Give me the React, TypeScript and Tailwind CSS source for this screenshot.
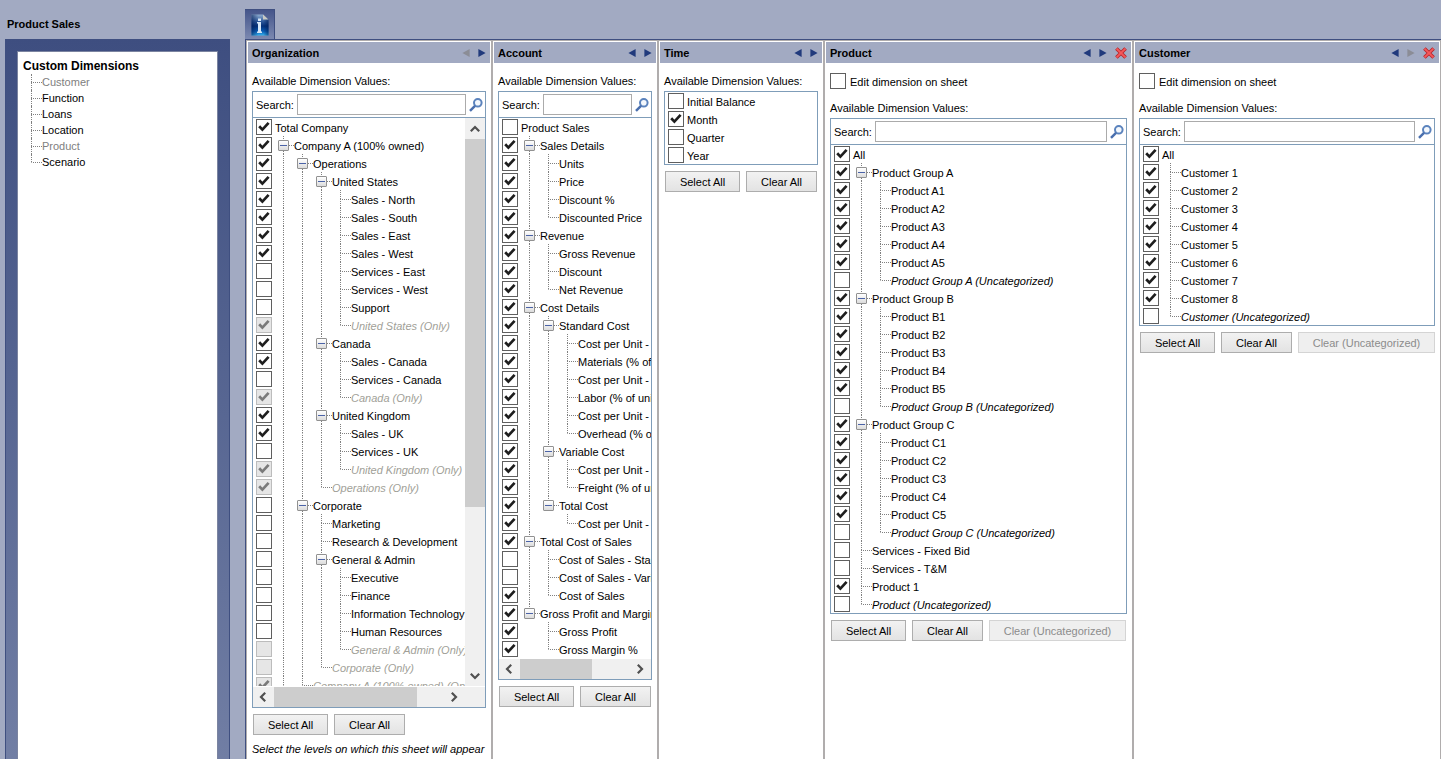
import React, { useId, useState } from 'react';

type Item = {
  label: string;
  level: number;
  on?: boolean;
  group?: boolean;
  italic?: boolean;
  disabled?: boolean;
};

// "+" = checked, "-" = unchecked, ">" = has children, "/" = italic, "!" = disabled
const parse = (text: string): Item[] =>
  text
    .trim()
    .split('\n')
    .map((line) => {
      const [level, flags, label] = line.trim().split('|');
      return {
        label,
        level: Number(level),
        on: flags.includes('+'),
        group: flags.includes('>'),
        italic: flags.includes('/'),
        disabled: flags.includes('!'),
      };
    });

const ORGANIZATION = parse(`
0|+|Total Company
1|+>|Company A (100% owned)
2|+>|Operations
3|+>|United States
4|+|Sales - North
4|+|Sales - South
4|+|Sales - East
4|+|Sales - West
4|-|Services - East
4|-|Services - West
4|-|Support
4|+/!|United States (Only)
3|+>|Canada
4|+|Sales - Canada
4|-|Services - Canada
4|+/!|Canada (Only)
3|+>|United Kingdom
4|+|Sales - UK
4|-|Services - UK
4|+/!|United Kingdom (Only)
3|+/!|Operations (Only)
2|->|Corporate
3|-|Marketing
3|-|Research & Development
3|->|General & Admin
4|-|Executive
4|-|Finance
4|-|Information Technology
4|-|Human Resources
4|-/!|General & Admin (Only)
3|-/!|Corporate (Only)
2|+/!|Company A (100% owned) (Only)
`);

const ACCOUNT = parse(`
0|-|Product Sales
1|+>|Sales Details
2|+|Units
2|+|Price
2|+|Discount %
2|+|Discounted Price
1|+>|Revenue
2|+|Gross Revenue
2|+|Discount
2|+|Net Revenue
1|+>|Cost Details
2|+>|Standard Cost
3|+|Cost per Unit - Materials
3|+|Materials (% of unit cost)
3|+|Cost per Unit - Labor
3|+|Labor (% of unit cost)
3|+|Cost per Unit - Overhead
3|+|Overhead (% of unit cost)
2|+>|Variable Cost
3|+|Cost per Unit - Freight
3|+|Freight (% of unit cost)
2|+>|Total Cost
3|+|Cost per Unit - Total
1|+>|Total Cost of Sales
2|-|Cost of Sales - Standard
2|-|Cost of Sales - Variable
2|+|Cost of Sales
1|+>|Gross Profit and Margin
2|+|Gross Profit
2|+|Gross Margin %
`);

const TIME = parse(`
0|-|Initial Balance
0|+|Month
0|-|Quarter
0|-|Year
`);

const PRODUCT = parse(`
0|+|All
1|+>|Product Group A
2|+|Product A1
2|+|Product A2
2|+|Product A3
2|+|Product A4
2|+|Product A5
2|-/|Product Group A (Uncategorized)
1|+>|Product Group B
2|+|Product B1
2|+|Product B2
2|+|Product B3
2|+|Product B4
2|+|Product B5
2|-/|Product Group B (Uncategorized)
1|+>|Product Group C
2|+|Product C1
2|+|Product C2
2|+|Product C3
2|+|Product C4
2|+|Product C5
2|-/|Product Group C (Uncategorized)
1|-|Services - Fixed Bid
1|-|Services - T&M
1|+|Product 1
1|-/|Product (Uncategorized)
`);

const CUSTOMER = parse(`
0|+|All
1|+|Customer 1
1|+|Customer 2
1|+|Customer 3
1|+|Customer 4
1|+|Customer 5
1|+|Customer 6
1|+|Customer 7
1|+|Customer 8
1|-/|Customer (Uncategorized)
`);

const CUSTOM_DIMENSIONS = [
  { name: 'Customer', used: true },
  { name: 'Function', used: false },
  { name: 'Loans', used: false },
  { name: 'Location', used: false },
  { name: 'Product', used: true },
  { name: 'Scenario', used: false },
];

function CheckBox(props: React.InputHTMLAttributes<HTMLInputElement>) {
  return (
    <span className="relative block w-4 h-4 shrink-0">
      <input
        type="checkbox"
        className="peer block w-4 h-4 appearance-none border border-[#5f5f5f] bg-white disabled:border-[#bcbcbc] disabled:bg-[#e6e6e6]"
        {...props}
      />
      <svg
        viewBox="0 0 16 16"
        className="absolute inset-0 w-4 h-4 pointer-events-none hidden peer-checked:block text-[#1e1e1e] peer-disabled:text-[#7a7a7a]"
      >
        <path d="M3.2 7.2 L6.4 10.6 L12.6 3.8" fill="none" stroke="currentColor" strokeWidth="2.7" />
      </svg>
    </span>
  );
}

// True when another node of the given level follows under the same parent
function continues(items: Item[], index: number, level: number, open: boolean) {
  for (let i = index + 1; i < items.length; i++) {
    if (items[i].level === level) return true;
    if (items[i].level < level) return false;
  }
  return open && level === 1;
}

interface TreeProps {
  items: Item[];
  checked: boolean[];
  onToggle: (index: number) => void;
  open?: boolean;
}

function Tree({ items, checked, onToggle, open = false }: TreeProps) {
  const id = useId();
  const [collapsed, setCollapsed] = useState<number[]>([]);

  const isHidden = (index: number) =>
    collapsed.some((c) => {
      if (c >= index) return false;
      return items.slice(c + 1, index + 1).every((item) => item.level > items[c].level);
    });

  const toggleGroup = (index: number) =>
    setCollapsed((prev) => (prev.includes(index) ? prev.filter((c) => c !== index) : [...prev, index]));

  return (
    <ul>
      {items.map((item, i) => {
        if (isHidden(i)) return null;
        return (
          <li key={i} className="flex h-[18px] pl-[3px]">
            <span className="pt-px pr-[3px]">
              <CheckBox
                id={`${id}-${i}`}
                checked={checked[i]}
                disabled={item.disabled}
                onChange={() => onToggle(i)}
              />
            </span>
            {Array.from({ length: item.level }, (_, n) => {
              const own = n + 1 === item.level;
              const next = continues(items, i, n + 1, open);
              return (
                <span key={n} className="w-[19px] h-[18px] shrink-0 pl-2 flex flex-col relative">
                  <span className={`h-[9px] border-l border-dotted ${own || next ? 'border-[#808080]' : 'border-transparent'}`} />
                  <span
                    className={`h-[9px] border-l border-dotted border-t ${next ? 'border-l-[#808080]' : 'border-l-transparent'} ${own ? 'border-t-[#808080]' : 'border-t-transparent'}`}
                  />
                  {own && item.group && (
                    <button
                      type="button"
                      aria-label={`Toggle ${item.label}`}
                      onClick={() => toggleGroup(i)}
                      className="absolute left-[3px] top-1 w-[11px] h-[11px] rounded-[1px] border border-[#919191] bg-linear-to-b from-white to-[#dcdcdc] flex items-center justify-center"
                    >
                      <span className="w-[7px] h-px bg-[#4b63a7]" />
                    </button>
                  )}
                </span>
              );
            })}
            <label
              htmlFor={`${id}-${i}`}
              className={`leading-[20px] whitespace-nowrap ${item.italic ? 'italic' : ''} ${item.disabled ? 'text-[#a19f98]' : ''}`}
            >
              {item.label}
            </label>
          </li>
        );
      })}
    </ul>
  );
}

function SearchIcon() {
  return (
    <svg viewBox="0 0 14 14" className="w-[14px] h-[14px] shrink-0">
      <circle cx="8.8" cy="4.8" r="3.8" fill="#f4f8fd" stroke="#5b83bd" strokeWidth="2" />
      <path d="M6 7.8 L1 12.8" stroke="#4a6fae" strokeWidth="2.4" />
    </svg>
  );
}

function SearchRow() {
  const id = useId();
  return (
    <div className="flex items-center h-[26px] pl-[3px] pr-[2px] border-b border-[#7f9db9]">
      <label htmlFor={id} className="mr-[3px]">Search:</label>
      <input id={id} type="text" className="flex-1 min-w-0 h-[21px] px-1 mr-[3px] border border-[#ababab] bg-white outline-none" />
      <button type="button" aria-label="Search">
        <SearchIcon />
      </button>
    </div>
  );
}

function Chevron({ d }: { d: string }) {
  return (
    <svg viewBox="0 0 10 10" className="w-[10px] h-[10px]">
      <path d={d} fill="none" stroke="#505050" strokeWidth="2.2" />
    </svg>
  );
}

function HorizontalScroll({ thumb, corner }: { thumb: string; corner?: boolean }) {
  return (
    <div className="flex h-5 bg-[#f0f0f0]">
      <button type="button" aria-label="Scroll left" className="w-[21px] pr-[2px] flex items-center justify-center">
        <Chevron d="M7.2 0.8 L3 5 L7.2 9.2" />
      </button>
      <div className="flex-1">
        <div className={`h-full bg-[#cdcdcd] ${thumb}`} />
      </div>
      <button type="button" aria-label="Scroll right" className="w-[21px] pr-[2px] flex items-center justify-center">
        <Chevron d="M2.8 0.8 L7 5 L2.8 9.2" />
      </button>
      {corner && <div className="w-5" />}
    </div>
  );
}

function VerticalScroll() {
  return (
    <div className="flex flex-col w-5 shrink-0 bg-[#f0f0f0]">
      <button type="button" aria-label="Scroll up" className="h-[21px] flex items-center justify-center">
        <Chevron d="M0.8 7.2 L5 3 L9.2 7.2" />
      </button>
      <div className="flex-1">
        <div className="w-full h-[368px] bg-[#cdcdcd]" />
      </div>
      <button type="button" aria-label="Scroll down" className="h-[21px] flex items-center justify-center">
        <Chevron d="M0.8 2.8 L5 7 L9.2 2.8" />
      </button>
    </div>
  );
}

function MoveButton({ dir, disabled }: { dir: 'left' | 'right'; disabled?: boolean }) {
  return (
    <button type="button" aria-label={`Move ${dir}`} disabled={disabled} className="w-4 h-4 flex items-center justify-center">
      <svg viewBox="0 0 8 8" className={`w-2 h-2 ${disabled ? 'text-[#8b8d96]' : 'text-[#213a7c]'}`}>
        <path d={dir === 'left' ? 'M7.6 0 V8 L0.4 4 Z' : 'M0.4 0 V8 L7.6 4 Z'} fill="currentColor" />
      </svg>
    </button>
  );
}

function RemoveButton() {
  return (
    <button type="button" aria-label="Remove" className="ml-1 mr-1 w-3 h-3">
      <svg viewBox="0 0 12 12" className="w-3 h-3">
        <path d="M1.4 1.4 L10.6 10.6 M10.6 1.4 L1.4 10.6" stroke="#b8262b" strokeWidth="3.6" />
        <path d="M1.6 1.6 L10.4 10.4 M10.4 1.6 L1.6 10.4" stroke="#f4585a" strokeWidth="2" />
      </svg>
    </button>
  );
}

const BUTTON = 'h-[21px] border border-[#adadad] bg-linear-to-b from-[#f2f2f2] to-[#e3e3e3] text-center';

interface PanelProps {
  title: string;
  items: Item[];
  width: string;
  editable?: boolean;
  search?: boolean;
  scroll?: 'both' | 'horizontal';
  noLeft?: boolean;
  noRight?: boolean;
  note?: string;
}

function Panel({ title, items, width, editable, search = true, scroll, noLeft, noRight, note }: PanelProps) {
  const id = useId();
  const [checked, setChecked] = useState(items.map((item) => !!item.on));

  const toggle = (index: number) => setChecked(checked.map((c, i) => (i === index ? !c : c)));
  const setAll = (value: boolean) => setChecked(checked.map((c, i) => (items[i].disabled ? c : value)));

  return (
    <section className={`${width} border-x border-t border-[#b0adad] bg-white px-px pt-px overflow-hidden`}>
      <header className="flex items-center h-[21px] pl-1 bg-[#a2aac2]">
        <h2 className="flex-1 font-bold">{title}</h2>
        <MoveButton dir="left" disabled={noLeft} />
        <MoveButton dir="right" disabled={noRight} />
        {editable && <RemoveButton />}
      </header>

      <div className="px-1">
        {editable && (
          <div className="flex items-start gap-1 pt-[10px] h-[26px]">
            <CheckBox id={`${id}-edit`} />
            <label htmlFor={`${id}-edit`} className="leading-[18px]">Edit dimension on sheet</label>
          </div>
        )}
        <p className={`${editable ? 'h-[29px] pt-[10px]' : 'h-7 pt-[9px]'} leading-[18px] whitespace-nowrap`}>
          Available Dimension Values:
        </p>

        <div className="border border-[#7f9db9]">
          {search && <SearchRow />}
          <div className={`flex ${scroll ? 'pb-px' : ''}`}>
            <div className={`flex-1 min-w-0 overflow-hidden ${scroll === 'both' ? 'h-[568px]' : ''}`}>
              <Tree items={items} checked={checked} onToggle={toggle} open={scroll === 'both'} />
            </div>
            {scroll === 'both' && <VerticalScroll />}
          </div>
          {scroll === 'both' && <HorizontalScroll thumb="w-[143px]" corner />}
          {scroll === 'horizontal' && <HorizontalScroll thumb="w-[72px]" />}
        </div>

        <div className="flex gap-[6px] pt-[6px] pl-px">
          <button type="button" onClick={() => setAll(true)} className={`${BUTTON} w-[75px]`}>
            Select All
          </button>
          <button type="button" onClick={() => setAll(false)} className={`${BUTTON} w-[71px]`}>
            Clear All
          </button>
          {editable && (
            <button type="button" disabled className="h-[21px] w-[137px] border border-[#d4d4d4] bg-[#efefef] text-[#8c8c8c]">
              Clear (Uncategorized)
            </button>
          )}
        </div>
        {note && <p className="pt-[5px] italic leading-[18px] whitespace-nowrap">{note}</p>}
      </div>
    </section>
  );
}

function InfoTab() {
  return (
    <button
      type="button"
      aria-label="Information"
      className="w-[30px] h-[30px] flex items-center justify-center border-t border-r border-[#3f4f80] bg-linear-to-b from-[#45558a] to-[#7c89b0]"
    >
      <svg viewBox="0 0 18 22" className="w-[18px] h-[22px]">
        <defs>
          <linearGradient id="page" x1="0" y1="0" x2="0" y2="1">
            <stop offset="0" stopColor="#8fadd0" />
            <stop offset="0.35" stopColor="#2a5598" />
            <stop offset="0.55" stopColor="#042f78" />
            <stop offset="0.8" stopColor="#0a5cb4" />
            <stop offset="1" stopColor="#35b4f0" />
          </linearGradient>
          <linearGradient id="edge" x1="0" y1="0" x2="1" y2="0">
            <stop offset="0" stopColor="#021d55" stopOpacity="0.6" />
            <stop offset="0.4" stopColor="#021d55" stopOpacity="0" />
            <stop offset="0.7" stopColor="#021d55" stopOpacity="0" />
            <stop offset="1" stopColor="#021d55" stopOpacity="0.6" />
          </linearGradient>
        </defs>
        <path d="M0.5 0.5 H12 L17.5 5.5 V21.5 H0.5 Z" fill="url(#page)" />
        <path d="M0.5 0.5 H12 L17.5 5.5 V21.5 H0.5 Z" fill="url(#edge)" />
        <path d="M12 0.5 L17.5 5.5 H12 Z" fill="#c9c9c3" />
        <path d="M6 8 H10 V17.5 H11 V19 H6 V17.5 H7 V9.5 H6 Z" fill="#d6e6f6" />
        <rect x="7" y="4.5" width="3" height="2.5" fill="#d6e6f6" />
      </svg>
    </button>
  );
}

function Sidebar() {
  return (
    <aside className="flex flex-col w-[230px] pl-[5px] shrink-0">
      <h1 className="h-[39px] pt-[15px] pl-[2px] leading-[18px] font-bold">Product Sales</h1>
      <div className="flex-1 flex pt-3 px-[11px] border-x border-[#3f4f80] bg-linear-to-b from-[#3e4e80] to-[#717ea4]">
        <div className="flex-1 pt-[6px] pl-[5px] bg-white border-x border-t border-[#7b84a0]">
          <h2 className="text-[12px] leading-[16px] font-bold">Custom Dimensions</h2>
          <ul className="pl-2">
            {CUSTOM_DIMENSIONS.map((dim, i) => (
              <li key={dim.name} className="flex h-4">
                <span className="w-[11px] flex flex-col">
                  <span className="h-2 border-l border-dotted border-[#808080]" />
                  <span
                    className={`h-2 border-l border-t border-dotted border-t-[#808080] ${i < CUSTOM_DIMENSIONS.length - 1 ? 'border-l-[#808080]' : 'border-l-transparent'}`}
                  />
                </span>
                <a href="#" className={`leading-[17px] ${dim.used ? 'text-[#808080]' : 'text-black'}`}>
                  {dim.name}
                </a>
              </li>
            ))}
          </ul>
        </div>
      </div>
    </aside>
  );
}

export default function App() {
  return (
    <div className="flex h-screen overflow-hidden bg-[#a2aac2] text-black text-[11px] leading-[14px] font-['Liberation_Sans',Arial,sans-serif]">
      <Sidebar />

      <main className="flex-1 min-w-0 flex flex-col pl-[15px]">
        <div className="h-[39px] pt-[9px]">
          <InfoTab />
        </div>

        {/* Dimension panels */}
        <div className="flex-1 min-h-0 flex border-t border-l border-[#3f4f80] bg-white">
          <Panel
            title="Organization"
            items={ORGANIZATION}
            width="w-[246px] shrink-0"
            scroll="both"
            noLeft
            note="Select the levels on which this sheet will appear"
          />
          <Panel title="Account" items={ACCOUNT} width="w-[166px] shrink-0" scroll="horizontal" />
          <Panel title="Time" items={TIME} width="w-[166px] shrink-0" search={false} />
          <Panel title="Product" items={PRODUCT} width="w-[309px] shrink-0" editable />
          <Panel title="Customer" items={CUSTOMER} width="flex-1 min-w-[308px]" editable noRight />
        </div>
      </main>
    </div>
  );
}
